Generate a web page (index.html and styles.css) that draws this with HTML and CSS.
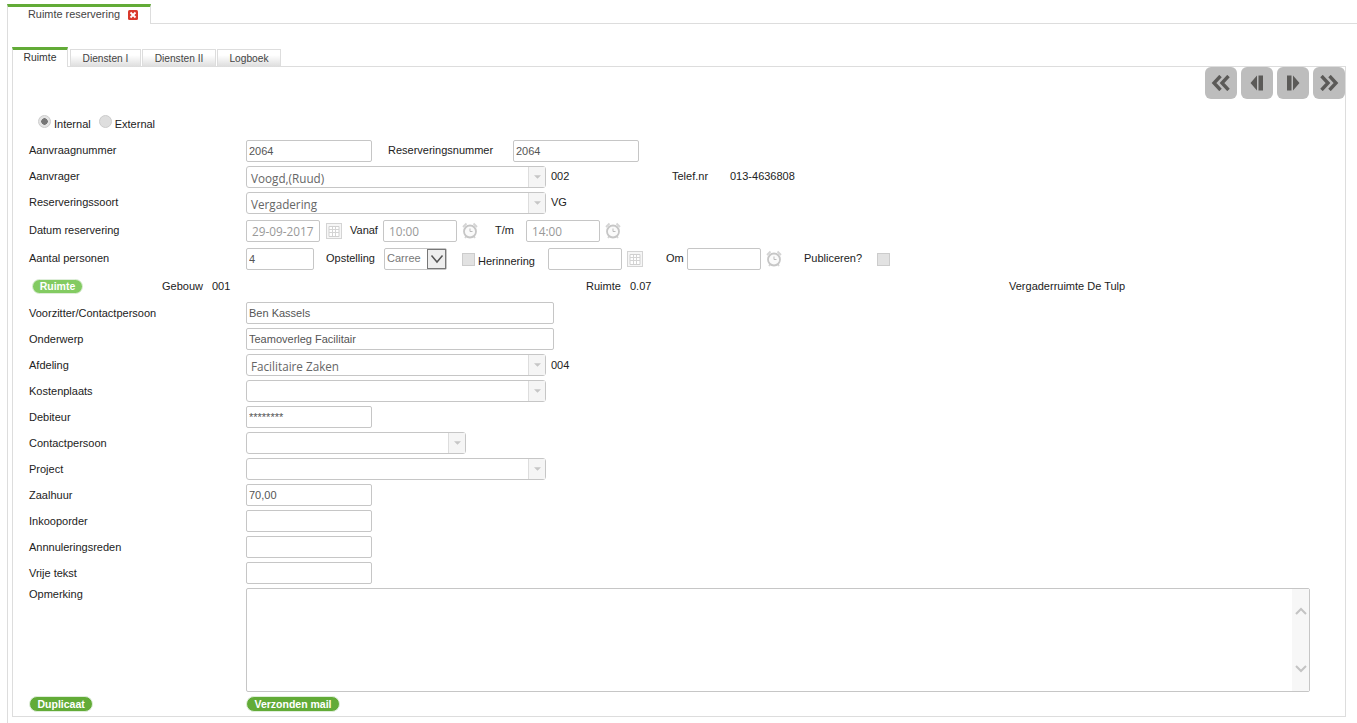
FILE: index.html
```html
<!DOCTYPE html>
<html lang="nl">
<head>
<meta charset="utf-8">
<title>Ruimte reservering</title>
<link rel="stylesheet" href="styles.css">
</head>
<body>
<svg class="defs" width="0" height="0" aria-hidden="true">
  <symbol id="cal" viewBox="0 0 16 16">
    <rect x="0.5" y="0.5" width="15" height="15" fill="#f6f6f6" stroke="#d4d4d4"/>
    <path d="M3 3.500h10v10H3z" fill="#fff" stroke="#d0d0d0"/>
    <path d="M6.500 4v9M9.500 4v9M3 6.500h10M3 9.500h10" stroke="#d4d4d4" fill="none"/>
  </symbol>
  <symbol id="clock" viewBox="0 0 16 17">
    <path d="M1 5l3.500-3.500M15 5l-3.500-3.500M3 16l1.500-2M13 16l-1.500-2" stroke="#d4d4d4" stroke-width="1.800" fill="none"/>
    <circle cx="8" cy="9.500" r="6" fill="#fafafa" stroke="#c6c6c6" stroke-width="1.800"/>
    <path d="M8 6.500v3h2.500" stroke="#bbb" fill="none"/>
  </symbol>
  <symbol id="caret" viewBox="0 0 8 4"><path d="M0 0h8L4 4z" fill="#c6c6c6"/></symbol>
</svg>

<nav class="top-tabs">
  <div class="top-tab">
    <span>Ruimte reservering</span>
    <svg class="close" viewBox="0 0 10 10"><rect width="10" height="10" rx="1.500" fill="#d9392c"/><path d="M2.500 2.500l5 5M7.500 2.500l-5 5" stroke="#fff" stroke-width="1.800"/></svg>
  </div>
  <div class="top-rule"></div>
</nav>

<main class="content">
  <div class="tabs">
    <div class="tab active">Ruimte</div>
    <div class="tab">Diensten I</div>
    <div class="tab t74">Diensten II</div>
    <div class="tab t64">Logboek</div>
  </div>

  <section class="panel">
    <div class="pager">
      <button class="pg" aria-label="Eerste"><svg viewBox="0 0 20 16"><path d="M9.500 1L3 8l6.500 7M17.500 1L11 8l6.500 7" fill="none" stroke="#5b5a58" stroke-width="3.400"/></svg></button>
      <button class="pg" aria-label="Vorige"><svg viewBox="0 0 20 16"><path d="M10 0.500v15L3.500 8zM11.500 0.500H16v15h-4.500z" fill="#5b5a58"/></svg></button>
      <button class="pg" aria-label="Volgende"><svg viewBox="0 0 20 16"><path d="M4 0.500h4.500v15H4zM10 0.500v15L16.500 8z" fill="#5b5a58"/></svg></button>
      <button class="pg" aria-label="Laatste"><svg viewBox="0 0 20 16"><path d="M2.500 1L9 8l-6.500 7M10.500 1L17 8l-6.500 7" fill="none" stroke="#5b5a58" stroke-width="3.400"/></svg></button>
    </div>

    <div class="radios">
      <span class="radio on"></span><span class="radio-l">Internal</span>
      <span class="radio second"></span><span class="radio-l">External</span>
    </div>

    <div class="row">
      <label class="label">Aanvraagnummer</label>
      <input class="in w126" value="2064">
      <span class="txt ml16 w125">Reserveringsnummer</span>
      <input class="in w126" value="2064">
    </div>
    <div class="row">
      <label class="label">Aanvrager</label>
      <div class="combo w300"><span>Voogd,(Ruud)</span><i><svg><use href="#caret"/></svg></i></div>
      <span class="txt ml5 w121">002</span>
      <span class="txt w58">Telef.nr</span>
      <span class="txt">013-4636808</span>
    </div>
    <div class="row gap6">
      <label class="label">Reserveringssoort</label>
      <div class="combo w300"><span>Vergadering</span><i><svg><use href="#caret"/></svg></i></div>
      <span class="txt ml5">VG</span>
    </div>
    <div class="row gap6">
      <label class="label">Datum reservering</label>
      <input class="in dis w74" value="29-09-2017">
      <svg class="ico ml6"><use href="#cal"/></svg>
      <span class="txt ml8 w33">Vanaf</span>
      <input class="in dis w74" value="10:00">
      <svg class="ico tall-ico ml5"><use href="#clock"/></svg>
      <span class="txt ml17 w31">T/m</span>
      <input class="in dis w74" value="14:00">
      <svg class="ico tall-ico ml5"><use href="#clock"/></svg>
    </div>
    <div class="row gap5">
      <label class="label">Aantal personen</label>
      <input class="in w68" value="4">
      <span class="txt ml12 w58">Opstelling</span>
      <div class="mini"><span>Carree</span><b><svg viewBox="0 0 14 10"><path d="M1.500 1.500L7 8l5.500-6.500" fill="none" stroke="#555" stroke-width="1.500"/></svg></b></div>
      <span class="check ml15"></span>
      <span class="txt low ml3 w70">Herinnering</span>
      <input class="in w74" value="">
      <svg class="ico ml5"><use href="#cal"/></svg>
      <span class="txt ml23 w21">Om</span>
      <input class="in w74" value="">
      <svg class="ico tall-ico ml5"><use href="#clock"/></svg>
      <span class="txt ml22 w73">Publiceren?</span>
      <span class="check"></span>
    </div>
    <div class="row ruimte">
      <button class="pill light ml3">Ruimte</button>
      <span class="txt ml79 w50">Gebouw</span>
      <span class="txt w374">001</span>
      <span class="txt w44">Ruimte</span>
      <span class="txt w379">0.07</span>
      <span class="txt">Vergaderruimte De Tulp</span>
    </div>
    <div class="row mid">
      <label class="label">Voorzitter/Contactpersoon</label>
      <input class="in w308" value="Ben Kassels">
    </div>
    <div class="row mid">
      <label class="label">Onderwerp</label>
      <input class="in w308" value="Teamoverleg Facilitair">
    </div>
    <div class="row mid">
      <label class="label">Afdeling</label>
      <div class="combo w300"><span>Facilitaire Zaken</span><i><svg><use href="#caret"/></svg></i></div>
      <span class="txt ml5">004</span>
    </div>
    <div class="row mid">
      <label class="label">Kostenplaats</label>
      <div class="combo w300"><span></span><i><svg><use href="#caret"/></svg></i></div>
    </div>
    <div class="row mid">
      <label class="label">Debiteur</label>
      <input class="in w126" value="********">
    </div>
    <div class="row mid">
      <label class="label">Contactpersoon</label>
      <div class="combo w220"><span></span><i><svg><use href="#caret"/></svg></i></div>
    </div>
    <div class="row mid">
      <label class="label">Project</label>
      <div class="combo w300"><span></span><i><svg><use href="#caret"/></svg></i></div>
    </div>
    <div class="row mid">
      <label class="label">Zaalhuur</label>
      <input class="in w126" value="70,00">
    </div>
    <div class="row mid">
      <label class="label">Inkooporder</label>
      <input class="in w126" value="">
    </div>
    <div class="row mid">
      <label class="label">Annnuleringsreden</label>
      <input class="in w126" value="">
    </div>
    <div class="row mid">
      <label class="label">Vrije tekst</label>
      <input class="in w126" value="">
    </div>
    <div class="row tall">
      <label class="label top">Opmerking</label>
      <div class="area">
        <div class="bar">
          <svg viewBox="0 0 12 8"><path d="M1 7l5-5 5 5" fill="none" stroke="#c4c4c4" stroke-width="2"/></svg>
          <svg viewBox="0 0 12 8"><path d="M1 1l5 5 5-5" fill="none" stroke="#c4c4c4" stroke-width="2"/></svg>
        </div>
      </div>
    </div>
    <div class="row last">
      <div class="label"><button class="pill">Duplicaat</button></div>
      <button class="pill">Verzonden mail</button>
    </div>
  </section>
</main>
</body>
</html>
```
FILE: styles.css
```css
* { box-sizing: border-box; }
html, body { margin: 0; height: 100%; overflow: hidden; background: #fff; }
body { font-family: "Liberation Sans", Arial, sans-serif; font-size: 11px; color: #222; }
.defs { position: absolute; }

.top-tabs { display: flex; height: 20px; margin: 4px 0 0 7px; }
.top-tab {
  width: 144px; border-top: 3px solid #62ab37; border-left: 1px solid #ddd; border-right: 1px solid #ddd;
  padding: 1px 0 0 20px; display: flex; align-items: flex-start; line-height: 13px; color: #444; font-size: 10.9px;
}
.close { width: 10px; height: 10px; margin: 2px 0 0 8px; }
.top-rule { flex: 1; border-bottom: 1px solid #ddd; }

.content { margin-left: 7px; border-left: 1px solid #ddd; padding: 23px 0 0 4px; height: 699px; }

.tabs { display: flex; height: 19px; position: relative; z-index: 1; }
.tab {
  width: 71px; height: 18px; margin: 2px 1px 0 0; border: 1px solid #ddd; border-bottom: 0;
  background: linear-gradient(#fff, #fff 30%, #dcdcdc); text-align: center; line-height: 17px; color: #444;
  font-size: 10.2px;
}
.tab.active {
  width: 56px; height: 20px; margin: 0 2px 0 0; border-top: 3px solid #62ab37; background: #fff; color: #333; line-height: 15px; font-size: 10.4px;
}
.t74 { width: 74px; }
.t64 { width: 64px; }

.panel { border: 1px solid #ddd; width: 1334px; height: 651px; padding: 0 0 0 16px; }

.pager { display: flex; justify-content: flex-end; gap: 4px; height: 32px; }
.pg { width: 32px; height: 32px; border: 0; padding: 0; background: #bdbdbd; border-radius: 6px; display: flex; align-items: center; justify-content: center; }
.pg svg { width: 20px; height: 16px; }

.radios { display: flex; align-items: center; height: 41px; margin-left: 9px; padding-top: 3px; }
.radio { width: 13px; height: 13px; border-radius: 50%; background: #dedede; border: 1px solid #ccc; }
.radio.on { background: radial-gradient(circle, #777 0 3px, #e4e4e4 3.500px); }
.radio.second { margin-left: 8px; }
.radio-l { margin-left: 3px; padding-top: 6px; color: #222; }

.row { display: flex; align-items: center; height: 22px; margin-bottom: 4px; }
.row.gap6 { margin-bottom: 6px; }
.row.gap5 { margin-bottom: 5px; }
.row.ruimte { margin-bottom: 5px; }
.row.tall { height: 104px; align-items: flex-start; }
.row.last { height: 16px; margin: 0; }

.label { width: 217px; flex: none; align-self: flex-start; line-height: 20px; display: block; }
.row.mid .label { line-height: 22px; }
.label.top { line-height: 13px; }
.row.last .label { line-height: 16px; }

.txt { flex: none; align-self: flex-start; line-height: 20px; white-space: nowrap; }
.txt.low { padding-top: 3px; }
.row.ruimte .txt { line-height: 22px; }
.row.mid .txt { line-height: 22px; }

.in {
  height: 22px; flex: none; border: 1px solid #c6c6c6; border-radius: 2px; padding: 0 1px 0 2px; background: #fff;
  font: 11px "Liberation Sans", Arial, sans-serif; color: #555; outline: 0;
}
.in.dis { font: 11.8px "Open Sans", sans-serif; color: #999; padding: 0 5px; }

.combo {
  height: 22px; flex: none; display: flex; border: 1px solid #c6c6c6; border-radius: 3px; background: #fff;
}
.combo span { flex: 1; padding: 2px 0 0 4px; font: 11.7px/18px "Open Sans", sans-serif; color: #666; }
.combo i { width: 17px; border-left: 1px solid #ddd; background: #f5f5f5; display: flex; align-items: center; justify-content: center; }
.combo i svg { width: 7px; height: 4px; }

.mini {
  width: 63px; height: 22px; flex: none; display: flex; border: 1px solid #c6c6c6; border-radius: 2px;
}
.mini span { flex: 1; padding-left: 2px; font: 11px/19px "Liberation Sans", sans-serif; color: #777; }
.mini b { width: 19px; height: 20px; border: 1px solid #777; background: #eee; display: flex; align-items: center; justify-content: center; }
.mini svg { width: 14px; height: 10px; }

.check { width: 13px; height: 13px; flex: none; background: #e2e2e2; border: 1px solid #ccc; }
.ico { width: 16px; height: 16px; flex: none; }
.tall-ico { height: 17px; margin-top: -2px; }

.pill {
  height: 16px; border: 1px solid #dfeeda; border-radius: 8px; padding: 0 7.500px; background: #62ab37; color: #fff;
  font: bold 10.500px/13px "Liberation Sans", sans-serif; display: inline-block; vertical-align: top;
}
.pill.light { width: 51px; height: 15px; background: #83cb62; padding: 0; }

.area { position: relative; width: 1064px; height: 104px; border: 1px solid #c6c6c6; border-radius: 2px; background: #fff; }
.bar { position: absolute; top: 0; right: 0; bottom: 0; width: 17px; background: #f7f7f7; display: flex; flex-direction: column; justify-content: space-between; align-items: center; padding: 18px 0; }
.bar svg { width: 12px; height: 8px; }

.w21 { width: 21px; } .w33 { width: 33px; } .w31 { width: 31px; } .w44 { width: 44px; } .w50 { width: 50px; }
.w58 { width: 58px; } .w68 { width: 68px; } .w70 { width: 70px; } .w73 { width: 73px; } .w74 { width: 74px; }
.w121 { width: 121px; } .w125 { width: 125px; } .w126 { width: 126px; } .w220 { width: 220px; }
.w300 { width: 300px; } .w308 { width: 308px; } .w374 { width: 374px; } .w379 { width: 379px; }
.ml3 { margin-left: 3px; } .ml5 { margin-left: 5px; } .ml6 { margin-left: 6px; } .ml8 { margin-left: 8px; }
.ml12 { margin-left: 12px; } .ml15 { margin-left: 15px; } .ml16 { margin-left: 16px; } .ml17 { margin-left: 17px; } .ml22 { margin-left: 22px; } .ml23 { margin-left: 23px; } .ml79 { margin-left: 79px; }
```
